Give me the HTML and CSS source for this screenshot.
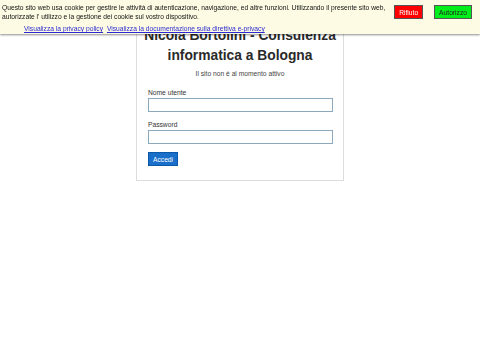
FILE: index.html
```html
<!DOCTYPE html>
<html lang="it">
<head>
<meta charset="utf-8">
<title>Nicola Bortolini - Consulenza informatica a Bologna</title>
<link rel="stylesheet" href="styles.css">
</head>
<body>
<div class="cookie-bar">
  <div class="cookie-text">
    <p class="cookie-msg">Questo sito web usa cookie per gestire le attività di autenticazione, navigazione, ed altre funzioni. Utilizzando il presente sito web, autorizzate l' utilizzo e la gestione dei cookie sul vostro dispositivo.</p>
    <p class="cookie-links"><a href="#">Visualizza la privacy policy</a> <a href="#">Visualizza la documentazione sulla direttiva e-privacy</a></p>
  </div>
  <div class="cookie-buttons">
    <button class="btn-refuse">Rifiuto</button>
    <button class="btn-accept">Autorizzo</button>
  </div>
</div>
<main class="page">
  <div class="card">
    <h1 class="title">Nicola Bortolini - Consulenza informatica a Bologna</h1>
    <p class="notice">Il sito non è al momento attivo</p>
    <form class="login">
      <label class="label" for="u">Nome utente</label>
      <input class="field" id="u" type="text">
      <label class="label" for="p">Password</label>
      <input class="field" id="p" type="password">
      <button class="submit" type="button">Accedi</button>
    </form>
  </div>
</main>
</body>
</html>
```
FILE: styles.css
```css
html, body {
  margin: 0;
  padding: 0;
  background: #ffffff;
  font-family: "Liberation Sans", Arial, sans-serif;
  color: #333;
}
.cookie-bar {
  position: fixed;
  top: 0;
  left: 0;
  right: 0;
  height: 34px;
  background: #fdfbe3;
  box-shadow: 0 1px 2px rgba(0,0,0,0.45);
  display: flex;
  justify-content: space-between;
  align-items: flex-start;
  z-index: 10;
}
.cookie-text {
  width: 392px;
  padding: 3px 0 0 2px;
}
.cookie-msg {
  margin: 0;
  font-size: 6.7px;
  line-height: 9px;
  color: #111;
}
.cookie-links {
  margin: 3px 0 0 22px;
  font-size: 6.7px;
  line-height: 9px;
}
.cookie-links a {
  color: #2a2ad0;
  margin-right: 2px;
}
.cookie-buttons {
  display: flex;
  gap: 11px;
  padding: 5px 8px 0 0;
}
.cookie-buttons button {
  font-family: "Liberation Sans", Arial, sans-serif;
  font-size: 6.7px;
  height: 14px;
  padding: 0 4px;
  border: 1px solid #555;
  cursor: pointer;
}
.btn-refuse {
  background: #ff0000;
  color: #fff;
}
.btn-accept {
  background: #00ee1a;
  color: #222;
}
.page {
  display: flex;
  justify-content: center;
  padding-top: 10px;
}
.card {
  width: 184px;
  border: 1px solid #dcdcdc;
  padding: 15px 11px 14px 11px;
  background: #fff;
}
.title {
  margin: 0 -6px;
  text-align: center;
  font-size: 13.8px;
  line-height: 20px;
  font-weight: bold;
  color: #2a2a2a;
}
.notice {
  margin: 3px 0 10px;
  text-align: center;
  font-size: 6.7px;
  line-height: 9px;
  color: #444;
}
.login {
  display: flex;
  flex-direction: column;
  align-items: flex-start;
}
.label {
  font-size: 6.7px;
  line-height: 9px;
  color: #333;
  margin-bottom: 1px;
}
.field {
  box-sizing: border-box;
  width: 185px;
  height: 14px;
  margin: 0 0 8px;
  border: 1px solid #8ba8bd;
  padding: 0 3px;
  background: #fff;
}
.submit {
  margin-top: 0;
  height: 14px;
  padding: 0 4px;
  background: #1a6fcb;
  color: #fff;
  border: 1px solid #0d57a8;
  font-family: "Liberation Sans", Arial, sans-serif;
  font-size: 6.7px;
}
```
